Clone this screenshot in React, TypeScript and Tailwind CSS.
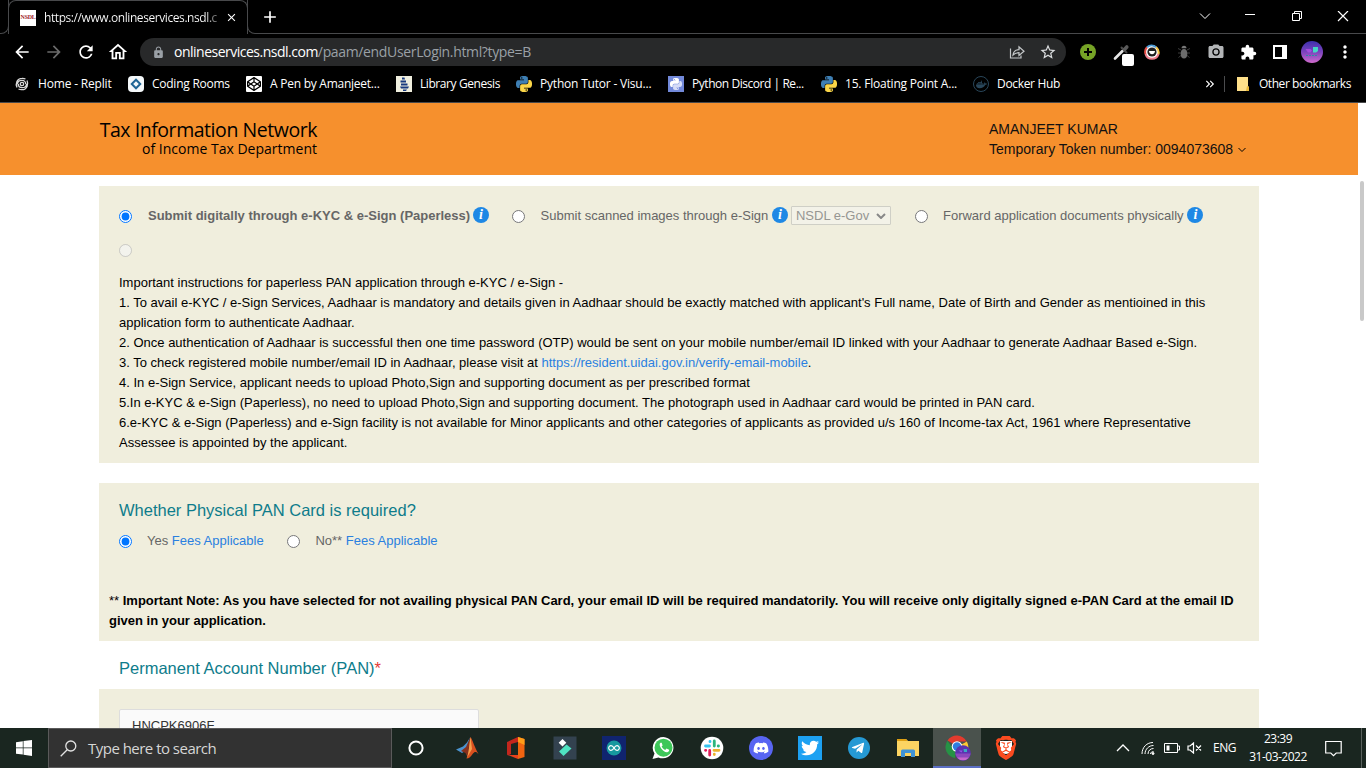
import type { ReactNode } from 'react';
import {
  MdArrowBack, MdArrowForward, MdRefresh, MdOutlineHome, MdLock, MdStarBorder, MdExtension, MdMoreVert,
  MdCameraAlt, MdKeyboardDoubleArrowRight, MdAdd, MdClose,
} from 'react-icons/md';
import { FaTelegramPlane, FaDiscord, FaTwitter, FaDocker, FaCodepen } from 'react-icons/fa';
import { SiBrave } from 'react-icons/si';

const PY_TOP =
  'M14.25.18l.9.2.73.26.59.3.45.32.34.34.25.34.16.33.1.3.04.26.02.2-.01.13V8.5l-.05.63-.13.55-.21.46-.26.38-.3.31-.33.25-.35.19-.35.14-.33.1-.3.07-.26.04-.21.02H8.77l-.69.05-.59.14-.5.22-.41.27-.33.32-.27.35-.2.36-.15.37-.1.35-.07.32-.04.27-.02.21v3.06H3.17l-.21-.03-.28-.07-.32-.12-.35-.18-.36-.26-.36-.36-.35-.46-.32-.59-.28-.73-.21-.88-.14-1.05-.05-1.23.06-1.22.16-1.04.24-.87.32-.71.36-.57.4-.44.42-.33.42-.24.4-.16.36-.1.32-.05.24-.01h.16l.06.01h8.16v-.83H6.18l-.01-2.75-.02-.37.05-.34.11-.31.17-.28.25-.26.31-.23.38-.2.44-.18.51-.15.58-.12.64-.1.71-.06.77-.04.84-.02 1.27.05zm-6.3 1.98l-.23.33-.08.41.08.41.23.34.33.22.41.09.41-.09.33-.22.23-.34.08-.41-.08-.41-.23-.33-.33-.22-.41-.09-.41.09z';

function PythonLogo({ top = '#3e7fb4', bottom = '#fbd648', className = 'size-4' }: { top?: string; bottom?: string; className?: string }) {
  return (
    <svg viewBox="0 0 24 24" className={className}>
      <path d={PY_TOP} fill={top} />
      <path d={PY_TOP} fill={bottom} transform="rotate(180 12 12)" />
    </svg>
  );
}

function Bookmark({ icon, label, className }: { icon: ReactNode; label: string; className: string }) {
  return (
    <div className={`flex shrink-0 items-center gap-2 ${className}`}>
      <span className="flex size-4 shrink-0 items-center justify-center">{icon}</span>
      <span className="whitespace-nowrap">{label}</span>
    </div>
  );
}

function TabStrip() {
  return (
    <div className="flex h-[34px] w-full">
      <div className="h-[34px] w-[9px] rounded-br-lg border-r border-b border-[#48494b]" />
      <div className="-ml-px flex h-[34px] w-[240px] items-center rounded-t-lg border-x border-t border-[#48494b] pl-[11px]">
        <span className="flex size-4 items-center justify-center overflow-hidden bg-white font-['Liberation_Serif',serif] text-[6px] font-bold tracking-[-0.3px] text-[#a01c28]">NSDL</span>
        <span className="ml-2 w-[176px] bg-gradient-to-r from-white from-[92%] to-[#333] bg-clip-text text-[12px] tracking-[-0.42px] whitespace-nowrap text-transparent">
          https://www.onlineservices.nsdl.c
        </span>
        <MdClose className="ml-[5px] size-[13px] text-white" />
      </div>
      <div className="-ml-px flex h-[34px] flex-1 items-center rounded-bl-lg border-b border-l border-[#48494b]">
        <MdAdd className="ml-[12px] size-5 text-white" />
        <div className="ml-auto flex items-center text-white">
          <svg viewBox="0 0 12 12" className="mr-[33px] size-3 fill-none stroke-white"><path d="M1 2.500l5 5 5-5" /></svg>
          <svg viewBox="0 0 12 12" className="mr-[35px] size-3 fill-none stroke-white"><path d="M1 3.500h10" /></svg>
          <svg viewBox="0 0 12 12" className="mr-[34px] size-3 fill-none stroke-white"><path d="M1.5 2.500h7v7h-7zM3.500 2.500v-2h7v7h-2" /></svg>
          <svg viewBox="0 0 12 12" className="mr-[17px] size-3 fill-none stroke-white"><path d="M1 0l10 10M11 0L1 10" strokeWidth="1.200" /></svg>
        </div>
      </div>
    </div>
  );
}

function Toolbar() {
  return (
    <div className="flex h-9 items-center pl-3 text-white">
      <MdArrowBack className="size-5" />
      <MdArrowForward className="ml-3 size-5 text-[#6b6b6b]" />
      <MdRefresh className="ml-3 size-5" />
      <MdOutlineHome className="ml-[11px] size-[22px]" />
      <div className="ml-[11px] flex h-7 w-[926px] items-center rounded-full bg-[#28292a] pl-3">
        <MdLock className="size-[13px] text-[#9aa0a6]" />
        <span className="ml-[9px] pb-px text-[14px] tracking-[-0.35px] whitespace-nowrap text-[#9aa0a6]">
          <span className="tracking-[-0.5px] text-white">onlineservices.nsdl.com</span>/paam/endUserLogin.html?type=B
        </span>
        <svg viewBox="0 0 16 16" className="ml-auto size-4 fill-none stroke-[#c4c7c9] stroke-[1.2]">
          <path d="M1.500 4.500v9.500h10.500v-2.500M4 11c.4-3.500 2.500-5.300 6-5.300V2.800l5 4.400-5 4.300V8.700C7.500 8.700 5.600 9.300 4 11z" />
        </svg>
        <MdStarBorder className="mr-[9px] ml-[14px] size-[18px] text-[#dcdee0]" />
      </div>
      <span className="ml-[14px] flex size-4 items-center justify-center rounded-full bg-[#76a326]">
        <svg viewBox="0 0 16 16" className="size-4 stroke-black stroke-2"><path d="M8 4v8M4 8h8" /></svg>
      </span>
      <svg viewBox="0 0 24 24" className="ml-[15px] size-6 overflow-visible">
        <path d="M4 18.500l7.500-7.500" stroke="#e6e6e6" strokeWidth="2.600" strokeLinecap="round" />
        <path d="M10.500 7.500l5 5" stroke="#4a4a4a" strokeWidth="2" strokeLinecap="round" /><path d="M13.500 9.500l2.300-2.500" stroke="#5a5a5a" strokeWidth="3.600" strokeLinecap="round" />
        <rect x="11" y="14" width="12" height="12" rx="2" fill="#fff" />
      </svg>
      <svg viewBox="0 0 16 16" className="ml-[9px] size-4">
        <circle cx="8" cy="8" r="7" fill="#fff" />
        <path d="M1.500 10A6.800 6.800 0 0 1 3 3.200" stroke="#e44b43" strokeWidth="2" fill="none" />
        <path d="M3 3.200a6.800 6.800 0 0 1 9 0" stroke="#4a9bd6" strokeWidth="2" fill="none" />
        <path d="M12 3.200a6.800 6.800 0 0 1 2.500 7" stroke="#f6c445" strokeWidth="2" fill="none" />
        <path d="M14.500 10a6.800 6.800 0 0 1-13 0" stroke="#ee7e8c" strokeWidth="2" fill="none" />
        <circle cx="8" cy="8" r="4.600" fill="#1d1d1d" />
        <path d="M5 7h6c0 2-1.300 3.200-3 3.200S5 9 5 7z" fill="#fff" />
      </svg>
      <svg viewBox="0 0 16 16" className="ml-4 size-4">
        <path d="M2 4.500l3 1.500M14 4.500l-3 1.500M2 9h3M14 9h-3M2.500 13.500l2.500-2M13.500 13.500l-2.500-2" stroke="#3d3d3d" />
        <ellipse cx="8" cy="9.800" rx="3.300" ry="4.700" fill="#6c6c6c" />
        <path d="M5.500 4.200a2.500 2.500 0 0 1 5 0z" fill="#777" />
      </svg>
      <MdCameraAlt className="ml-[15px] size-[18px] text-[#b3b5b7]" />
      <MdExtension className="ml-[15px] size-[17px]" />
      <span className="ml-4 flex h-[14px] w-[14px] border-2 border-white"><span className="ml-auto w-[3px] bg-white" /></span>
      <span className="ml-[14px] flex size-[22px] items-center justify-center rounded-full bg-gradient-to-b from-[#3d2fae] via-[#7c43bd] to-[#d069cc]">
        <svg viewBox="0 0 22 22" className="size-[22px]">
          <path d="M4.500 8h5l1.500 1.500-1.500 2H7z" fill="#a54bdd" /><path d="M12 6h5v4l-2 1.500h-3z" fill="#46d6c5" /><path d="M5 14.500h12" stroke="#2c8da3" strokeDasharray="2 1" />
        </svg>
      </span>
      <MdMoreVert className="ml-[12px] size-5" />
    </div>
  );
}

function Bookmarks() {
  return (
    <div className="flex h-8 items-center pr-[15px] pb-1 pl-[14px] text-[12px] tracking-[-0.25px] text-white">
      <Bookmark className="w-[114px] tracking-[-0.18px]" label="Home - Replit" icon={
        <svg viewBox="0 0 16 16" className="size-4 fill-none stroke-[#d8d8d8] stroke-[1.300]">
          <circle cx="8" cy="8" r="1.700" />
          <path d="M8 4.300c-2.800 0-4.500 1.700-4.500 4M8 4.300c2.300 0 3.700 1.600 3.700 3.700M8 11.700c2.800 0 4.500-1.700 4.500-4M8 11.700c-2.300 0-3.700-1.600-3.700-3.700M3 11.500C1.300 8 2.800 2.300 8 2.300M13 4.500c1.700 3.500.2 9.200-5 9.200M11.500 3c-1-.5-2-.8-3.500-.7M4.500 13c1 .5 2 .8 3.500.7" />
        </svg>} />
      <Bookmark className="w-[118px]" label="Coding Rooms" icon={
        <span className="flex size-4 items-center justify-center rounded-sm bg-[#f4f8fa]"><span className="size-[8px] rotate-45 border-2 border-[#1f6595]" /></span>} />
      <Bookmark className="w-[150px]" label="A Pen by Amanjeet..." icon={
        <span className="flex size-4 items-center justify-center rounded-[1px] bg-white text-black"><FaCodepen className="size-[14px]" /></span>} />
      <Bookmark className="w-[120px] tracking-[-0.42px]" label="Library Genesis" icon={
        <svg viewBox="0 0 16 16" className="size-4"><path fill="#f0efdf" d="M0 0h16v16H0z" /><path d="M6 1.500h2.500l.5 2H6zM4.500 4.500H10v2H4.500zM5 7.500h6.500v2H5zM4 10.500h9l-1 2H5zM7 13.500h4l-1 1.500H7z" fill="#17397f" /></svg>} />
      <Bookmark className="w-[152px] tracking-[-0.2px]" label="Python Tutor - Visu..." icon={<PythonLogo />} />
      <Bookmark className="w-[153px] tracking-[-0.45px]" label="Python Discord | Re..." icon={
        <span className="flex size-4 items-center justify-center bg-[#7289da]"><PythonLogo top="#fff" bottom="#d5dcf7" className="size-3" /></span>} />
      <Bookmark className="w-[152px] tracking-[-0.2px]" label="15. Floating Point A..." icon={<PythonLogo />} />
      <Bookmark className="w-[100px] tracking-[-0.33px]" label="Docker Hub" icon={
        <span className="flex size-4 items-center justify-center rounded-full border border-[#29465a]"><FaDocker className="size-[11px] text-[#29465a]" /></span>} />
      <MdKeyboardDoubleArrowRight className="ml-auto size-[14px]" />
      <span className="ml-[7px] h-4 w-px bg-[#4b4c4e]" />
      <span className="ml-[12px] flex items-center gap-[10px]">
        <svg viewBox="0 0 12 14" className="h-[14px] w-3"><path d="M0 0h11v9l1 1v4H0z" fill="#ffe08a" /><path d="M10 9l2 1v4h-3z" fill="#e9b93c" /></svg>
        <span className="tracking-[-0.43px] whitespace-nowrap">Other bookmarks</span>
      </span>
    </div>
  );
}

function Info({ className = '' }: { className?: string }) {
  return (
    <span className={`flex size-4 shrink-0 items-center justify-center rounded-full bg-[#1e88e5] font-['Liberation_Serif',serif] text-[14px] leading-none font-bold text-white italic ${className}`}>i</span>
  );
}

function Page() {
  return (
    <div className="flex h-[625px] overflow-hidden bg-white font-['Liberation_Sans',Arial,sans-serif] text-[13px] leading-5 text-black">
      <div className="w-[1358px] shrink-0">
        <header className="flex h-[72px] bg-[#f6902d] pl-[99px]">
          <div className="flex w-[218px] flex-col items-end pt-[15px] font-['Open_Sans','Noto_Sans',sans-serif] whitespace-nowrap">
            <span className="text-[19.500px] leading-[23px] tracking-[-0.45px]">Tax Information Network</span>
            <span className="text-[14px] leading-[16px] tracking-[0.01px]">of Income Tax Department</span>
          </div>
          <div className="ml-[672px] pt-4 text-[14px] text-[#111]">
            <div>AMANJEET KUMAR</div>
            <div className="flex items-center whitespace-nowrap">Temporary Token number: 0094073608
              <svg viewBox="0 0 8 6" className="mt-px ml-[5px] h-[6px] w-2 fill-none stroke-black"><path d="M.5 1L4 4.500 7.500 1" /></svg>
            </div>
          </div>
        </header>

        <main className="ml-[99px] w-[1160px]">
          <section className="mt-[11px] h-[277px] bg-[#f0eedd] px-5 pt-[19px]">
            <div className="flex h-5 items-center whitespace-nowrap text-[#666]">
              <input type="radio" name="mode" defaultChecked className="mt-[3px] size-[13px]" />
              <b className="mt-[2px] ml-4 w-[322px]">Submit digitally through e-KYC &amp; e-Sign (Paperless)</b>
              <Info className="ml-[3px]" />
              <input type="radio" name="mode" className="mt-[3px] ml-[23px] size-[13px]" />
              <span className="mt-[2px] ml-[15.600px] w-[228.400px]">Submit scanned images through e-Sign</span>
              <Info className="ml-[3px]" />
              <span className="mt-px ml-[3px] flex h-[19px] w-[100px] items-center rounded-[1px] border border-[#cfcfc6] bg-[#f3f2e8] pt-px pl-1 text-[#969692]">
                NSDL e-Gov
                <svg viewBox="0 0 10 6" className="mr-1 mb-px ml-auto h-[6px] w-[10px] fill-none stroke-[#888] stroke-2"><path d="M1 1l4 4 4-4" /></svg>
              </span>
              <input type="radio" name="mode" className="mt-[3px] ml-6 size-[13px]" />
              <span className="mt-[2px] ml-[15px] w-[241px]">Forward application documents physically</span>
              <Info className="ml-[3.400px]" />
            </div>
            <div className="mt-[15px] flex h-5 items-center"><input type="radio" disabled className="size-[13px]" /></div>
            <div className="mt-[13px] whitespace-nowrap">
              <p>Important instructions for paperless PAN application through e-KYC / e-Sign -</p>
              <p>1. To avail e-KYC / e-Sign Services, Aadhaar is mandatory and details given in Aadhaar should be exactly matched with applicant's Full name, Date of Birth and Gender as mentioined in this</p>
              <p>application form to authenticate Aadhaar.</p>
              <p>2. Once authentication of Aadhaar is successful then one time password (OTP) would be sent on your mobile number/email ID linked with your Aadhaar to generate Aadhaar Based e-Sign.</p>
              <p>3. To check registered mobile number/email ID in Aadhaar, please visit at <span className="text-[#2a80e0]">https://resident.uidai.gov.in/verify-email-mobile</span>.</p>
              <p>4. In e-Sign Service, applicant needs to upload Photo,Sign and supporting document as per prescribed format</p>
              <p>5.In e-KYC &amp; e-Sign (Paperless), no need to upload Photo,Sign and supporting document. The photograph used in Aadhaar card would be printed in PAN card.</p>
              <p>6.e-KYC &amp; e-Sign (Paperless) and e-Sign facility is not available for Minor applicants and other categories of applicants as provided u/s 160 of Income-tax Act, 1961 where Representative</p>
              <p>Assessee is appointed by the applicant.</p>
            </div>
          </section>

          <section className="mt-5 h-[158px] bg-[#f0eedd] px-[10px] pt-[17px] whitespace-nowrap">
            <h2 className="pl-[10px] text-[16.500px] text-[#0e7c8b]">Whether Physical PAN Card is required?</h2>
            <div className="mt-[11px] flex h-5 items-center pl-[10px] text-[#666]">
              <input type="radio" name="card" defaultChecked className="mt-px size-[13px]" />
              <span className="ml-[15px] w-[117px]">Yes <span className="text-[#2a80e0]">Fees Applicable</span></span>
              <input type="radio" name="card" className="mt-px ml-[23px] size-[13px]" />
              <span className="ml-[15.400px]">No** <span className="text-[#2a80e0]">Fees Applicable</span></span>
            </div>
            <div className="mt-10 font-bold">
              <p><span className="font-normal">**</span> Important Note: As you have selected for not availing physical PAN Card, your email ID will be required mandatorily. You will receive only digitally signed e-PAN Card at the email ID</p>
              <p>given in your application.</p>
            </div>
          </section>

          <h2 className="h-12 pt-[17px] pl-5 text-[16.500px] text-[#0e7c8b]">Permanent Account Number (PAN)<span className="text-[#e53935]">*</span></h2>
          <section className="h-[120px] bg-[#f0eedd] pt-5 pl-5">
            <div className="h-[40px] w-[360px] rounded-[2px] border border-[#ddd] bg-[#fafafa] pt-[6px] pl-3 text-[13px] text-[#333]">HNCPK6906F</div>
          </section>
        </main>
      </div>
      <div className="mt-[78px] ml-[2px] h-[140px] w-1 rounded-full bg-[#c9c9c9]" />
    </div>
  );
}

function Slot({ children, className = '' }: { children: ReactNode; className?: string }) {
  return <div className={`flex h-10 w-[49.200px] shrink-0 items-center justify-center ${className}`}>{children}</div>;
}

function Taskbar() {
  return (
    <div className="flex h-10 items-center bg-[#1a2620] text-white">
      <div className="flex w-12 justify-center">
        <svg viewBox="0 0 16 16" className="size-4 fill-white"><path d="M0 2.200L6.800 1.200v6.300H0zM7.500 1.100L16 0v7.500H7.500zM0 8.200h6.800v6.400L0 13.700zM7.500 8.200H16V16l-8.500-1.200z" /></svg>
      </div>
      <div className="flex h-10 w-[344px] items-center border border-[#5a5a5a] bg-[#323232] pl-[11px]">
        <svg viewBox="0 0 17 17" className="size-[17px] fill-none stroke-[#e2e2e2] stroke-[1.300]"><circle cx="10.800" cy="6" r="5" /><path d="M7.200 9.700L.7 16.300" /></svg>
        <span className="ml-[11px] text-[15px] tracking-[-0.52px] text-[#d6d6d6]">Type here to search</span>
      </div>
      <Slot className="-ml-px"><svg viewBox="0 0 16 16" className="size-4 fill-none stroke-white stroke-2"><circle cx="8" cy="8" r="6.600" /></svg></Slot>
      <Slot className="pl-[4px]">
        <svg viewBox="0 0 24 24" className="size-6">
          <path d="M1 13.500l7-3 4-4 3-5-4 13-4 2.500z" fill="#4b93cf" /><path d="M6 15l5-4 4.500-10-3 20-2-4z" fill="#87301d" />
          <path d="M15.500 1c2 3 4.500 11 8 17-2.500-3-4-2.500-5.500-.5-2 3-4 5-6.500 5 2.500-5 2.500-14 4-21.500z" fill="#d9501f" /><path d="M15.500 1l1.500 12-5.500 9.500c2.500-5 2.500-14 4-21.500z" fill="#f6a04d" />
        </svg>
      </Slot>
      <Slot className="pl-[4px]">
        <svg viewBox="0 0 20 24" className="h-6 w-5"><path d="M1 6l11-5v5L5 8v10l-3 1.500-1-1z" fill="#c4261d" /><path d="M12 1l6.500 2v18L12 23z" fill="#f06410" /><path d="M12 1l6.500 2v6L12 6z" fill="#ff9d18" /><path d="M2 19h10v4z" fill="#e8401c" /></svg>
      </Slot>
      <Slot className="pl-[4px]">
        <svg viewBox="0 0 24 24" className="size-6"><path fill="#33424f" d="M.5.500h23v23H.500z" /><path d="M9.500 3l3.800 3.800-3.800 3.800-3.800-3.800z" fill="#fff" /><path d="M13.500 8.500l5 4-8 7.500-4.500-4.500z" fill="#4fe3c1" /></svg>
      </Slot>
      <Slot className="pl-[3px]">
        <svg viewBox="0 0 24 24" className="size-6"><path fill="#10246f" d="M0 0h24v24H0z" /><circle cx="12" cy="12" r="7.500" fill="#16989f" /><path d="M12 12c-1-1.700-2-2.300-3-2.300a2.300 2.300 0 1 0 0 4.600c1 0 2-.6 3-2.300zm0 0c1-1.700 2-2.300 3-2.300a2.300 2.300 0 1 1 0 4.600c-1 0-2-.6-3-2.300z" fill="none" stroke="#fff" strokeWidth="1.200" /></svg>
      </Slot>
      <Slot className="pl-[2px]">
        <svg viewBox="0 0 24 24" className="size-6 overflow-visible">
          <path d="M12.500 1a10.700 10.700 0 1 1-5 20.500L1.500 23l2-5.500A10.700 10.700 0 0 1 12.500 1z" fill="#fff" /><circle cx="12.500" cy="11.700" r="9" fill="#3dc759" />
          <path d="M9.500 6.700c-3 2 2.500 10 6.800 9.500 1.500-.5 2-1.500 1.800-2.500l-2.600-1.300-1.300 1.500c-1.800-.7-2.800-1.700-3.600-3.300l1-1.200-.9-2.600z" fill="#fff" />
        </svg>
      </Slot>
      <Slot className="pl-[2px]">
        <svg viewBox="0 0 24 24" className="size-6">
          <circle cx="12" cy="12" r="11.300" fill="#fff" />
          <g strokeWidth="2.800" strokeLinecap="round"><path d="M10 5.500v.2M5.500 10H9.500" stroke="#36c5f0" /><path d="M14.300 5v5M18.500 10h-.3" stroke="#2eb67d" /><path d="M14 14.300h5M14.300 18.500v-.3" stroke="#ecb22e" /><path d="M9.700 14.500V19M5.500 14.300h.3" stroke="#e01e5a" /></g>
        </svg>
      </Slot>
      <Slot className="pl-[2px]"><span className="flex size-6 items-center justify-center rounded-full bg-[#5865f2]"><FaDiscord className="size-4" /></span></Slot>
      <Slot className="pl-[2px]"><span className="flex size-6 items-center justify-center bg-[#1da1f2]"><FaTwitter className="size-[18px]" /></span></Slot>
      <Slot className="pl-[2px]"><span className="flex size-[22px] items-center justify-center rounded-full bg-[#2599d4]"><FaTelegramPlane className="mr-[2px] size-[14px]" /></span></Slot>
      <Slot className="pl-px">
        <svg viewBox="0 0 22 20" className="h-5 w-[22px]"><path d="M0 1h9l2 2h11v15H0z" fill="#fcd462" /><path d="M0 1h9l1.500 2H0z" fill="#dfa013" /><path d="M4 19v-6a1.500 1.500 0 0 1 1.500-1.500h11A1.500 1.500 0 0 1 18 13v6h-4v-4H8v4z" fill="#3f93d6" /></svg>
      </Slot>
      <div className="ml-px flex h-10 w-12 items-center justify-center border-b-2 border-[#5b6fc4] bg-[#4a524d] pt-[2px] pl-[2px]">
        <svg viewBox="0 0 26 26" className="size-[26px]">
          <path d="M12 11L2.500 5.500A11 11 0 0 1 21.500 6.500H12z" fill="#e33b2e" /><path d="M12 12l9.800-5.500A11 11 0 0 1 12 23z" fill="#fcc934" /><path d="M2.500 5.800L11 18l-1 5A11 11 0 0 1 2.500 5.800z" fill="#269245" />
          <circle cx="12" cy="11.500" r="5.300" fill="#fff" /><circle cx="12" cy="11.500" r="4.200" fill="#2f7de1" />
          <circle cx="18" cy="18" r="7.800" fill="#5b33b0" /><path d="M10.300 18.500h15.400a7.800 7.800 0 0 1-15.400 0z" fill="#8c48bd" /><path d="M12 22.500h12a7.800 7.800 0 0 1-12 0z" fill="#c768cc" /><path d="M18.500 14h3.500v3h-3z" fill="#3aa9c4" /><path d="M13.500 15.500h4l-1 2z" fill="#9554e4" />
        </svg>
      </div>
      <Slot className="pl-px">
        <span className="relative flex size-6 items-center justify-center">
          <span className="absolute top-[5px] left-[6px] h-[13px] w-3 rounded-b-full bg-white" />
          <SiBrave className="relative size-6 text-[#fb4b20]" />
        </span>
      </Slot>
      <div className="ml-auto flex h-10 items-center">
        <svg viewBox="0 0 14 8" className="h-2 w-[14px] fill-none stroke-white stroke-[1.300]"><path d="M1 7l6-6 6 6" /></svg>
        <svg viewBox="0 0 14 14" className="ml-[11px] size-[14px] fill-none stroke-white"><path d="M1 13C1 6 6 1.500 12 1.500M4 13c0-5 4-8.500 8.500-8.500M7 13c0-3.500 2.500-5.500 5.500-5.500M9.500 13c0-1.500 1.500-2.500 3-2.500" /><circle cx="12" cy="12.500" r="1" fill="#fff" /></svg>
        <svg viewBox="0 0 16 10" className="ml-[9px] h-[10px] w-4 fill-none stroke-white"><path d="M.5.500h13v9H.500zM14 3h1.500v4H14" /><path d="M2.500 2.500h3v5h-3z" fill="#fff" stroke="none" /></svg>
        <svg viewBox="0 0 15 12" className="ml-[7px] h-3 w-[15px] fill-none stroke-white stroke-[1.200]"><path d="M1 4h2l3.500-3v10L3 8H1zM9 3.500l5 5M14 3.500l-5 5" /></svg>
        <span className="ml-[11px] w-[24px] text-[12px] tracking-[-0.5px]">ENG</span>
        <div className="ml-[10px] w-[62px] text-center text-[12px] leading-[18px] tracking-[-0.500px]"><div>23:39</div><div>31-03-2022</div></div>
        <svg viewBox="0 0 17 17" className="ml-[16px] size-[17px] fill-none stroke-white stroke-[1.200]"><path d="M.7 1.500h15.500v11.500h-5l-2.700 2.700L5.800 13H.7z" /></svg>
        <span className="ml-[19px] h-10 w-px bg-[#59615d]" /><span className="w-1" />
      </div>
    </div>
  );
}

export default function App() {
  return (
    <div className="h-[768px] w-[1366px] overflow-hidden bg-black font-['Open_Sans','Noto_Sans',sans-serif]">
      <TabStrip />
      <Toolbar />
      <Bookmarks />
      <div className="h-px bg-[#48494b]" />
      <Page />
      <Taskbar />
    </div>
  );
}
